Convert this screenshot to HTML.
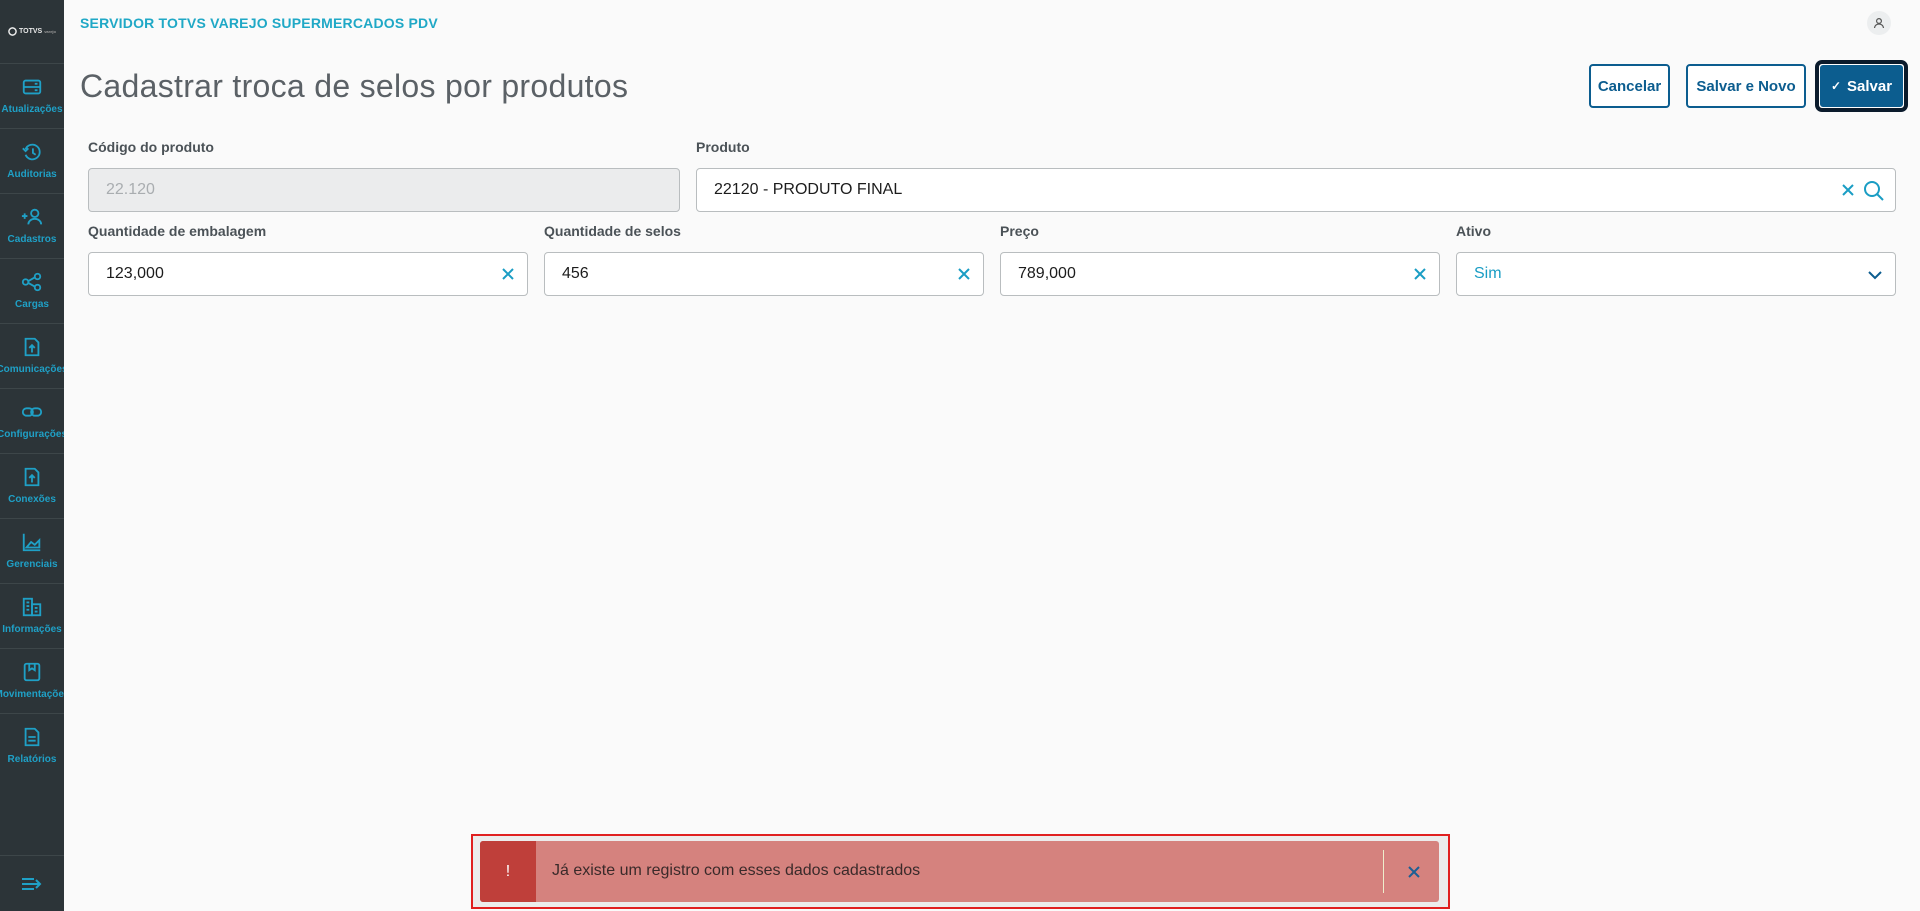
<!DOCTYPE html>
<html><head><meta charset="utf-8"><style>
*{box-sizing:border-box;margin:0;padding:0}
body{width:1920px;height:911px;background:#fafafa;font-family:"Liberation Sans",sans-serif;position:relative;overflow:hidden}
.sb{position:absolute;left:0;top:0;width:64px;height:911px;background:#2c3438}
.logo{height:64px;border-bottom:1px solid #3d4649;display:flex;align-items:center;justify-content:center;color:#e8e8e8;font-size:7px;font-weight:bold;gap:2px}
.it{height:65px;border-bottom:1px solid #3d4649;display:flex;flex-direction:column;align-items:center;padding-top:12px;color:#1fa0c6;font-size:10px;font-weight:bold;white-space:nowrap;overflow:hidden}
.it svg{width:22px;height:22px;margin-bottom:6px}
.bot{position:absolute;bottom:0;left:0;width:64px;height:56px;border-top:1px solid #3d4649;display:flex;align-items:center;justify-content:center}
.hdr{position:absolute;left:80px;top:15px;color:#1fa8c6;font-size:14px;font-weight:bold;letter-spacing:.2px}
.av{position:absolute;left:1867px;top:11px;width:24px;height:24px;border-radius:50%;background:#eceeef;display:flex;align-items:center;justify-content:center}
h1{position:absolute;left:80px;top:68px;font-weight:normal;font-size:32px;color:#5b6166;letter-spacing:.3px}
.btn{position:absolute;top:64px;height:44px;border:2px solid #0c5d8f;border-radius:4px;color:#0c5d8f;font-weight:bold;font-size:15px;display:flex;align-items:center;justify-content:center;background:#fff}
.lbl{position:absolute;font-size:14px;font-weight:bold;color:#4b5257}
.in{position:absolute;height:44px;border:1px solid #b9bdbf;border-radius:4px;background:#fff;font-size:16px;color:#1c1c1c;padding-left:17px;display:flex;align-items:center}
.x{position:absolute;right:12px;top:12px}
.toast{position:absolute;left:471px;top:834px;width:979px;height:75px;border:2px solid #e02020;background:#ececec}
.ti{position:absolute;left:7px;top:5px;width:959px;height:61px;background:#d5827e;border-radius:3px;overflow:hidden}
</style></head><body>
<div class="sb">
<div class="logo"><svg width="9" height="9" viewBox="0 0 10 10"><circle cx="5" cy="5" r="4" fill="none" stroke="#eee" stroke-width="1.6"/></svg>TOTVS<span style="font-size:4px;color:#999">varejo</span></div>
<div class="it"><svg viewBox="0 0 24 24" fill="none" stroke="#1fa0c6" stroke-width="2"><rect x="3" y="5" width="18" height="14" rx="2"/><line x1="3" y1="12" x2="21" y2="12"/><line x1="15" y1="8.5" x2="18" y2="8.5"/><line x1="15" y1="15.5" x2="18" y2="15.5"/></svg>Atualizações</div>
<div class="it"><svg viewBox="0 0 24 24" fill="none" stroke="#1fa0c6" stroke-width="2"><path d="M5 9a8 8 0 1 1 0 6"/><path d="M2 8l3 3 3-3"/><path d="M13 8v5l3 2"/></svg>Auditorias</div>
<div class="it"><svg viewBox="0 0 24 24" fill="none" stroke="#1fa0c6" stroke-width="2"><path d="M1 11h6M4 8v6"/><circle cx="15" cy="8" r="4"/><path d="M8 20a7 6 0 0 1 14 0"/></svg>Cadastros</div>
<div class="it"><svg viewBox="0 0 24 24" fill="none" stroke="#1fa0c6" stroke-width="2"><circle cx="5" cy="12" r="3"/><circle cx="18" cy="6" r="3"/><circle cx="18" cy="18" r="3"/><path d="M8 11l7-4M8 13l7 4"/></svg>Cargas</div>
<div class="it"><svg viewBox="0 0 24 24" fill="none" stroke="#1fa0c6" stroke-width="2"><path d="M5 3h10l4 4v14H5z"/><path d="M12 18v-8M9 13l3-3 3 3"/></svg>Comunicações</div>
<div class="it"><svg viewBox="0 0 24 24" fill="none" stroke="#1fa0c6" stroke-width="2"><rect x="2" y="8" width="11" height="8" rx="4"/><rect x="11" y="8" width="11" height="8" rx="4"/></svg>Configurações</div>
<div class="it"><svg viewBox="0 0 24 24" fill="none" stroke="#1fa0c6" stroke-width="2"><path d="M5 3h10l4 4v14H5z"/><path d="M12 18v-8M9 13l3-3 3 3"/></svg>Conexões</div>
<div class="it"><svg viewBox="0 0 24 24" fill="none" stroke="#1fa0c6" stroke-width="2"><path d="M3 3v18h18"/><path d="M6 18l5-6 4 3 5-5v8z"/></svg>Gerenciais</div>
<div class="it"><svg viewBox="0 0 24 24" fill="none" stroke="#1fa0c6" stroke-width="2"><rect x="3" y="3" width="9" height="18"/><rect x="12" y="9" width="9" height="12"/><path d="M6 7h3M6 11h3M6 15h3M15 13h3M15 17h3"/></svg>Informações</div>
<div class="it"><svg viewBox="0 0 24 24" fill="none" stroke="#1fa0c6" stroke-width="2"><rect x="4" y="3" width="16" height="18" rx="2"/><path d="M9 3v7l3-2 3 2V3"/></svg>Movimentações</div>
<div class="it" style="border-bottom:none"><svg viewBox="0 0 24 24" fill="none" stroke="#1fa0c6" stroke-width="2"><path d="M5 3h10l4 4v14H5z"/><path d="M8 12h8M8 16h8"/></svg>Relatórios</div>
<div class="bot"><svg width="22" height="16" viewBox="0 0 22 16" fill="none" stroke="#1fa0c6" stroke-width="2"><path d="M1 3h12M1 8h18M1 13h12M15 4l4 4-4 4"/></svg></div>
</div>
<div class="hdr">SERVIDOR TOTVS VAREJO SUPERMERCADOS PDV</div>
<div class="av"><svg width="12" height="12" viewBox="0 0 12 12" fill="none" stroke="#555" stroke-width="1.2"><circle cx="6" cy="4" r="2.4"/><path d="M1.5 11a4.5 4 0 0 1 9 0"/></svg></div>
<h1>Cadastrar troca de selos por produtos</h1>
<div class="btn" style="left:1589px;width:81px">Cancelar</div>
<div class="btn" style="left:1686px;width:120px">Salvar e Novo</div>
<div style="position:absolute;left:1815px;top:60px;width:93px;height:52px;border:4px solid #0b1b2c;border-radius:7px"></div>
<div class="btn" style="left:1819px;width:85px;background:#0c5d8f;color:#fff;border-color:#fff;border-width:1px"><span style="font-size:12px;margin-right:6px">✓</span>Salvar</div>

<div class="lbl" style="left:88px;top:139px">Código do produto</div>
<div class="in" style="left:88px;top:168px;width:592px;background:#ebeced;color:#a9adb0">22.120</div>
<div class="lbl" style="left:696px;top:139px">Produto</div>
<div class="in" style="left:696px;top:168px;width:1200px">22120 - PRODUTO FINAL
<svg style="position:absolute;right:40px;top:14px" width="14" height="14" viewBox="0 0 14 14" stroke="#1a9dc4" stroke-width="2"><path d="M2 2l10 10M12 2L2 12"/></svg>
<svg style="position:absolute;right:10px;top:11px" width="22" height="22" viewBox="0 0 22 22" fill="none" stroke="#1a9dc4" stroke-width="2"><circle cx="9" cy="9" r="7"/><path d="M14 14l6 6"/></svg></div>

<div class="lbl" style="left:88px;top:223px">Quantidade de embalagem</div>
<div class="in" style="left:88px;top:252px;width:440px">123,000<svg class="x" style="top:14px" width="14" height="14" viewBox="0 0 14 14" stroke="#1a9dc4" stroke-width="2"><path d="M2 2l10 10M12 2L2 12"/></svg></div>
<div class="lbl" style="left:544px;top:223px">Quantidade de selos</div>
<div class="in" style="left:544px;top:252px;width:440px">456<svg class="x" style="top:14px" width="14" height="14" viewBox="0 0 14 14" stroke="#1a9dc4" stroke-width="2"><path d="M2 2l10 10M12 2L2 12"/></svg></div>
<div class="lbl" style="left:1000px;top:223px">Preço</div>
<div class="in" style="left:1000px;top:252px;width:440px">789,000<svg class="x" style="top:14px" width="14" height="14" viewBox="0 0 14 14" stroke="#1a9dc4" stroke-width="2"><path d="M2 2l10 10M12 2L2 12"/></svg></div>
<div class="lbl" style="left:1456px;top:223px">Ativo</div>
<div class="in" style="left:1456px;top:252px;width:440px;color:#1a9dc4">Sim<svg class="x" style="top:17px" width="16" height="10" viewBox="0 0 16 10" fill="none" stroke="#0c5d8f" stroke-width="2"><path d="M2 2l6 6 6-6"/></svg></div>

<div class="toast"><div class="ti">
<div style="position:absolute;left:0;top:0;width:56px;height:61px;background:#bf3f3a;color:#fff;font-size:16px;display:flex;align-items:center;justify-content:center">!</div>
<div style="position:absolute;left:72px;top:21px;font-size:16px;color:#3a2a2a">Já existe um registro com esses dados cadastrados</div>
<div style="position:absolute;left:903px;top:9px;width:1px;height:43px;background:#eec"></div>
<svg style="position:absolute;left:927px;top:24px" width="14" height="14" viewBox="0 0 14 14" stroke="#1c5f94" stroke-width="2"><path d="M2 2l10 10M12 2L2 12"/></svg>
</div></div>
</body></html>
